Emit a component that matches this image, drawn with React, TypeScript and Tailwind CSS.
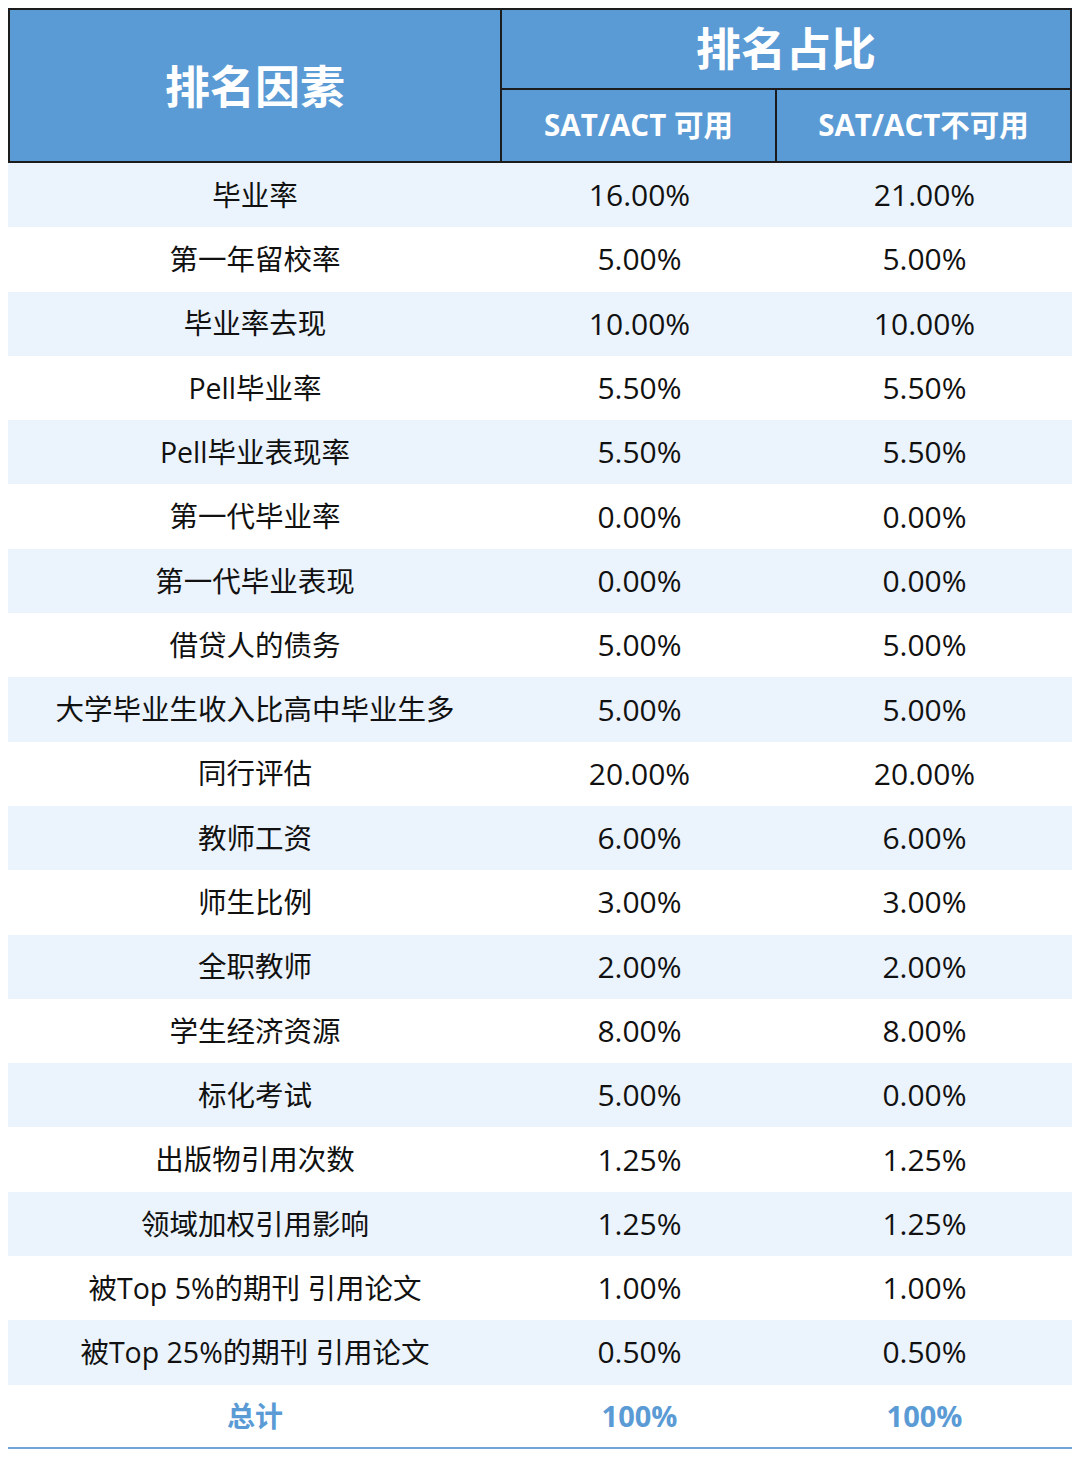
const rows: [string, string, string][] = [
  ["毕业率", "16.00%", "21.00%"],
  ["第一年留校率", "5.00%", "5.00%"],
  ["毕业率去现", "10.00%", "10.00%"],
  ["Pell毕业率", "5.50%", "5.50%"],
  ["Pell毕业表现率", "5.50%", "5.50%"],
  ["第一代毕业率", "0.00%", "0.00%"],
  ["第一代毕业表现", "0.00%", "0.00%"],
  ["借贷人的债务", "5.00%", "5.00%"],
  ["大学毕业生收入比高中毕业生多", "5.00%", "5.00%"],
  ["同行评估", "20.00%", "20.00%"],
  ["教师工资", "6.00%", "6.00%"],
  ["师生比例", "3.00%", "3.00%"],
  ["全职教师", "2.00%", "2.00%"],
  ["学生经济资源", "8.00%", "8.00%"],
  ["标化考试", "5.00%", "0.00%"],
  ["出版物引用次数", "1.25%", "1.25%"],
  ["领域加权引用影响", "1.25%", "1.25%"],
  ["被Top 5%的期刊 引用论文", "1.00%", "1.00%"],
  ["被Top 25%的期刊 引用论文", "0.50%", "0.50%"],
];

export default function App() {
  return (
    <div
      className="w-[1080px] h-[1458px] bg-white pt-[8px] pl-[8px]"
      style={{ fontFamily: '"Open Sans", "Noto Sans CJK SC", sans-serif' }}
    >
      <div className="w-[1064px]">
        <div className="grid grid-cols-[492px_275px_1fr] grid-rows-[80px_71px] border-2 border-[#1c1c1c] bg-[#5b9bd5] text-white font-bold">
          <div className="row-span-2 border-r-2 border-[#1c1c1c] flex items-center justify-center text-[45px] pt-[2px]">
            排名因素
          </div>
          <div className="col-span-2 border-b-2 border-[#1c1c1c] flex items-center justify-center text-[45px]">
            排名占比
          </div>
          <div className="border-r-2 border-[#1c1c1c] flex items-center justify-center text-[29.5px]">
            SAT/ACT 可用
          </div>
          <div className="flex items-center justify-center text-[29.5px]">
            SAT/ACT不可用
          </div>
        </div>
        {rows.map((r, i) => (
          <div
            key={i}
            className={`grid grid-cols-[494px_275px_1fr] h-[64.3px] items-center text-[#111] ${
              i % 2 === 0 ? "bg-[#ebf3fc]" : "bg-white"
            }`}
          >
            <div className="text-center text-[28.5px]">{r[0]}</div>
            <div className="text-center text-[30px] leading-[40px]">{r[1]}</div>
            <div className="text-center text-[30px] leading-[40px]">{r[2]}</div>
          </div>
        ))}
        <div className="grid grid-cols-[494px_275px_1fr] h-[64.3px] items-center text-[28px] font-bold text-[#5b9bd5] border-b-2 border-[#6fa6da]">
          <div className="text-center">总计</div>
          <div className="text-center text-[29px]">100%</div>
          <div className="text-center text-[29px]">100%</div>
        </div>
      </div>
    </div>
  );
}
